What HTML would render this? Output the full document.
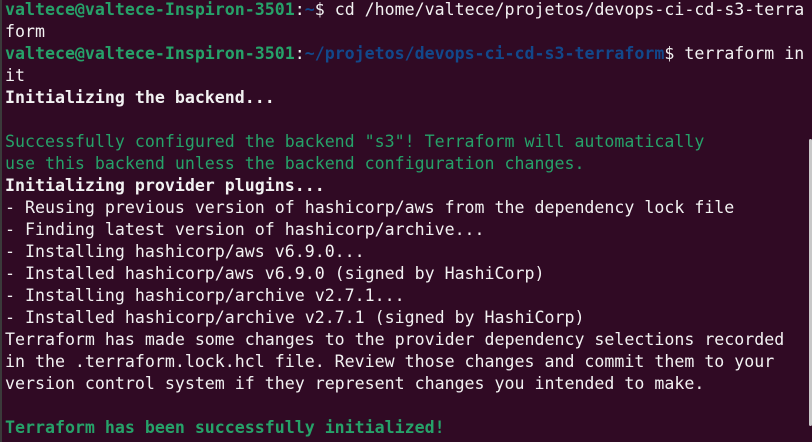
<!DOCTYPE html>
<html><head><meta charset="utf-8"><style>
html,body{margin:0;padding:0;}
body{width:812px;height:442px;background:#300a24;overflow:hidden;position:relative;}
pre{margin:0;position:absolute;left:5px;top:-1px;font-family:"DejaVu Sans Mono","Liberation Mono",monospace;font-size:16.6px;line-height:22px;color:#f2f2f2;white-space:pre;}
.g{color:#26a269;font-weight:bold}
.gn{color:#26a269}
.b{color:#12488b;font-weight:bold}
.w{font-weight:bold}
.lb{position:absolute;left:0;top:0;width:2px;height:442px;background:#3a3a3a}
.sb{position:absolute;left:809px;top:139px;width:3px;height:287px;background:#c8c8c8;border-radius:2px}
</style></head><body>
<div class="lb"></div><div class="sb"></div>
<pre><span class="g">valtece@valtece-Inspiron-3501</span>:<span class="b">~</span>$ cd /home/valtece/projetos/devops-ci-cd-s3-terra
form
<span class="g">valtece@valtece-Inspiron-3501</span>:<span class="b">~/projetos/devops-ci-cd-s3-terraform</span>$ terraform in
it
<span class="w">Initializing the backend...</span>

<span class="gn">Successfully configured the backend "s3"! Terraform will automatically</span>
<span class="gn">use this backend unless the backend configuration changes.</span>
<span class="w">Initializing provider plugins...</span>
- Reusing previous version of hashicorp/aws from the dependency lock file
- Finding latest version of hashicorp/archive...
- Installing hashicorp/aws v6.9.0...
- Installed hashicorp/aws v6.9.0 (signed by HashiCorp)
- Installing hashicorp/archive v2.7.1...
- Installed hashicorp/archive v2.7.1 (signed by HashiCorp)
Terraform has made some changes to the provider dependency selections recorded
in the .terraform.lock.hcl file. Review those changes and commit them to your
version control system if they represent changes you intended to make.

<span class="g">Terraform has been successfully initialized!</span></pre>
</body></html>
